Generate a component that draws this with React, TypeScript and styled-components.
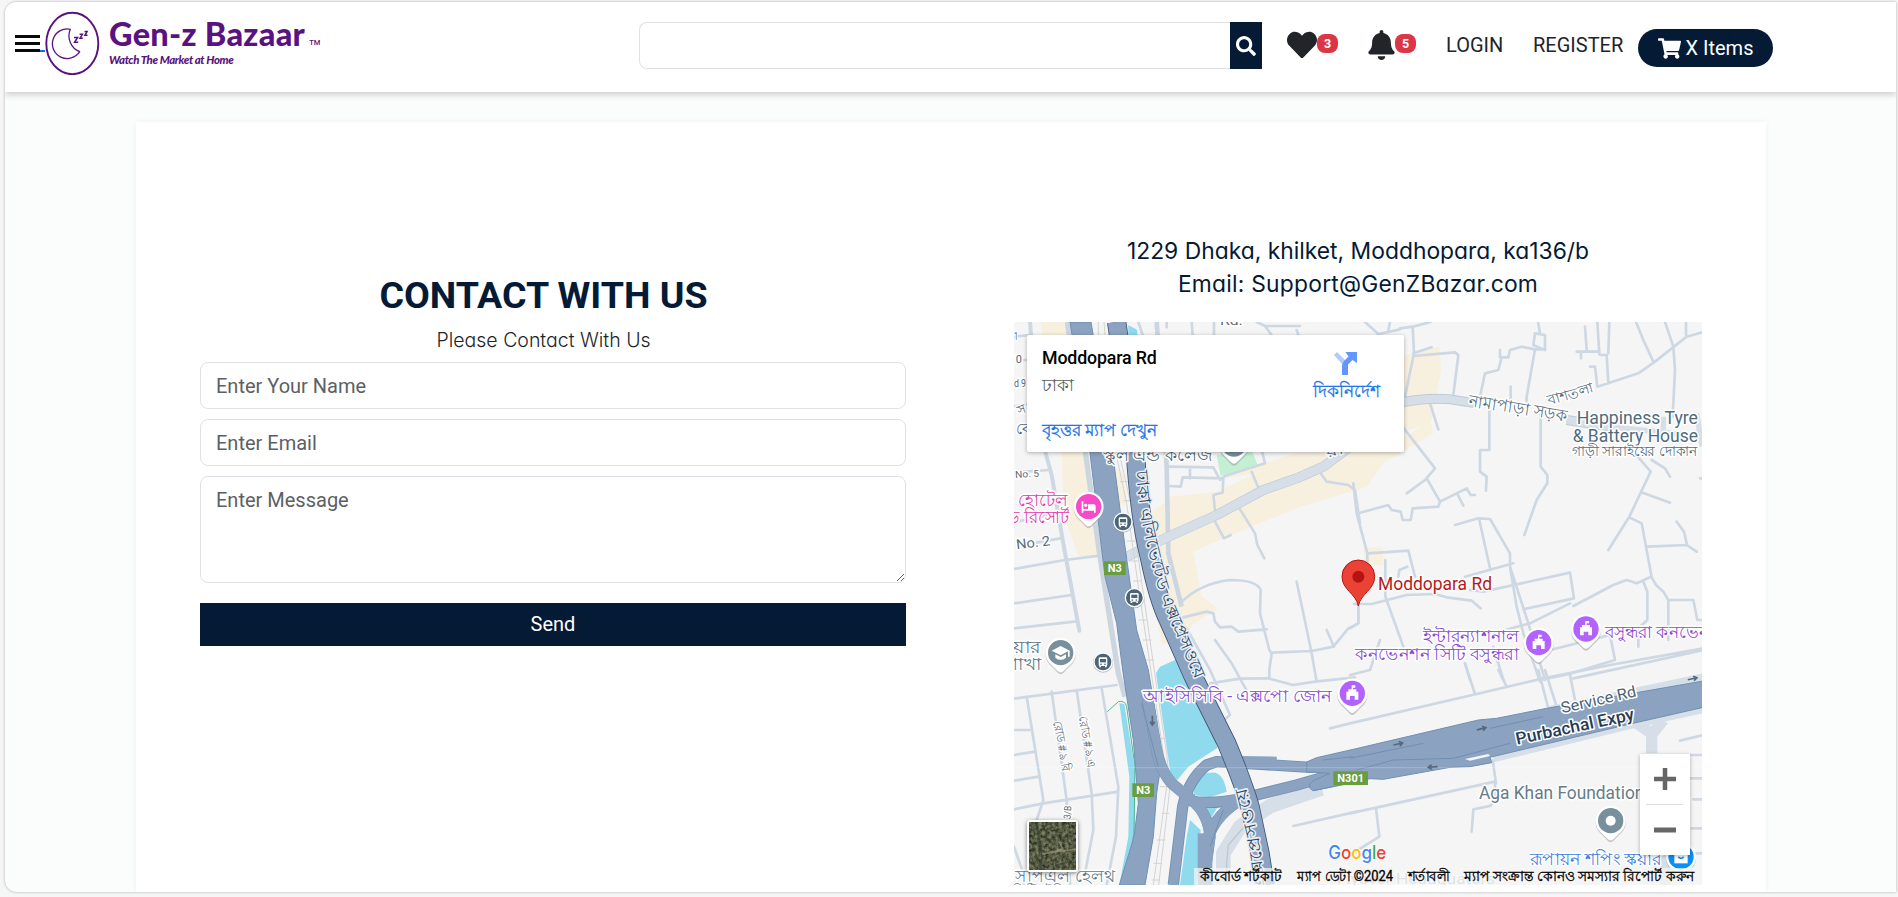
import React from 'react';
import styled, { createGlobalStyle } from 'styled-components';
import { FaHeart, FaBell, FaSearch, FaShoppingCart } from 'react-icons/fa';

const NAVY = '#041a35';
const PURPLE = '#5a1280';

const GlobalStyle = createGlobalStyle`
  * { box-sizing: border-box; }
  body {
    margin: 0;
    background: #f6f6f6;
    font-family: Roboto, 'Noto Sans', sans-serif;
    font-size: 20px;
    color: #212529;
    overflow: hidden;
  }
`;

const Frame = styled.div`
  display: flex;
  flex-direction: column;
  height: 890px;
  margin: 2px 2px 5px 5px;
  background: #fafdfc;
  border-radius: 12px 0 0 12px;
  box-shadow: 0 0 3px rgba(0, 0, 0, 0.3);
  overflow: hidden;
`;

const Header = styled.header`
  display: flex;
  align-items: flex-start;
  flex: none;
  height: 90px;
  padding-left: 10px;
  background: #fff;
  box-shadow: 0 3px 6px rgba(0, 0, 0, 0.18);
`;

const Burger = styled.div`
  display: flex;
  flex-direction: column;
  gap: 4px;
  width: 25px;
  margin-top: 33px;
`;

const Bar = styled.span`
  height: 3px;
  background: #0a0a0a;
`;

const LogoLink = styled.a`
  display: flex;
  align-items: flex-start;
  width: 599px;
  color: ${PURPLE};
`;

const LinkTick = styled.span`
  width: 5px;
  height: 2px;
  margin-top: 48px;
  background: #0d6efd;
`;

const LogoMark = styled.svg`
  width: 55px;
  height: 64px;
  margin-top: 9px;
`;

const Brand = styled.div`
  margin: 11px 0 0 9px;
  font-family: Lato, sans-serif;
  white-space: nowrap;
`;

const BrandName = styled.div`
  font-size: 32.5px;
  font-weight: 900;
  line-height: 42px;
  letter-spacing: 0.3px;
  sup {
    margin-left: 4px;
    font: 500 7.5px Roboto, sans-serif;
    letter-spacing: 0;
    vertical-align: 1px;
  }
`;

const Tagline = styled.div`
  margin-top: -5px;
  font-size: 11.4px;
  font-style: italic;
  font-weight: 900;
  line-height: 19px;
  letter-spacing: -0.38px;
`;

const Search = styled.div`
  display: flex;
  width: 623px;
  height: 47px;
  margin-top: 20px;
`;

const SearchInput = styled.input`
  flex: 1;
  border: 1px solid #dee2e6;
  border-right: 0;
  border-radius: 8px 0 0 8px;
  outline: none;
`;

const SearchButton = styled.button`
  display: flex;
  align-items: center;
  justify-content: center;
  width: 32px;
  border: 0;
  padding: 0;
  background: ${NAVY};
  color: #fff;
  font-size: 20px;
`;

const Counter = styled.div<{ $left: number }>`
  display: flex;
  align-items: flex-start;
  height: 34px;
  margin: 28px 0 0 ${p => p.$left}px;
`;

const Badge = styled.span`
  width: 21px;
  height: 19px;
  margin-top: 4px;
  border-radius: 8px;
  background: #dc3545;
  color: #fff;
  font-size: 12.5px;
  font-weight: 700;
  line-height: 19px;
  text-align: center;
`;

const NavLink = styled.a<{ $left: number; $width: number }>`
  width: ${p => p.$width}px;
  margin: 31px 0 0 ${p => p.$left}px;
  line-height: 24px;
  white-space: nowrap;
`;

const Cart = styled.button`
  display: flex;
  align-items: center;
  justify-content: center;
  gap: 5px;
  width: 135px;
  height: 38px;
  margin: 27px 0 0 15px;
  border: 0;
  border-radius: 19px;
  padding: 0;
  background: ${NAVY};
  color: #fff;
  font: 20px Roboto, sans-serif;
`;

const Panel = styled.main`
  display: flex;
  align-items: flex-start;
  width: 1630px;
  height: 780px;
  margin: 30px 0 0 131px;
  padding: 0 64px;
  background: #fff;
  box-shadow: 0 0 5px rgba(0, 0, 0, 0.06);
`;

const Form = styled.form`
  display: flex;
  flex-direction: column;
  width: 706px;
  padding-top: 150px;
`;

const Title = styled.h1`
  width: 687px;
  margin: 0;
  color: ${NAVY};
  font-size: 37.5px;
  font-weight: 700;
  line-height: 46px;
  text-align: center;
`;

const Subtitle = styled.p`
  width: 687px;
  margin: 9px 0 8px;
  font-family: Inter, sans-serif;
  font-feature-settings: 'cv11';
  font-size: 19.5px;
  font-weight: 300;
  line-height: 27px;
  text-align: center;
`;

const fieldCss = `
  border: 1px solid #dee2e6;
  border-radius: 8px;
  padding: 10px 15px;
  background: #fff;
  font: 20px/27px Roboto, sans-serif;
  outline: none;
  &::placeholder { color: #5c6065; opacity: 1; }
`;

const Field = styled.input`
  ${fieldCss}
  height: 47px;
  margin-bottom: 10px;
`;

const Message = styled.textarea`
  ${fieldCss}
  height: 107px;
  margin-bottom: 20px;
  resize: vertical;
`;

const Send = styled.button`
  height: 43px;
  border: 0;
  padding: 0 0 2px;
  background: ${NAVY};
  color: #fff;
  font: 20px Roboto, sans-serif;
`;

const Place = styled.section`
  width: 688px;
  margin-left: 108px;
  padding-top: 113px;
`;

const Address = styled.address`
  margin-bottom: 21px;
  color: ${NAVY};
  font-family: Inter, sans-serif;
  font-feature-settings: 'cv11';
  font-size: 22.85px;
  font-style: normal;
  line-height: 33px;
  text-align: center;
`;

const Email = styled.div`
  letter-spacing: 0.22px;
`;

const MapBox = styled.div`
  position: relative;
  width: 688px;
  height: 563px;
  overflow: hidden;
  background: #f5f5f5;
`;

const MapSvg = styled.svg`
  display: block;
  width: 688px;
  height: 563px;
  font-family: Roboto, sans-serif;
`;

const InfoCard = styled.div`
  position: absolute;
  left: 13px;
  top: 13px;
  display: flex;
  justify-content: space-between;
  width: 377px;
  height: 117px;
  padding: 11px 22px 0 15px;
  border-radius: 2px;
  background: #fff;
  box-shadow: 0 1px 4px rgba(0, 0, 0, 0.3);
`;

const PlaceName = styled.div`
  color: #000;
  font-size: 17.8px;
  font-weight: 500;
  line-height: 24px;
  letter-spacing: -0.15px;
`;

const PlaceCity = styled.div`
  margin-top: 4px;
  color: #5b5b5b;
  font-size: 16.5px;
  line-height: 24px;
`;

const BlueLink = styled.a<{ $top: number }>`
  display: block;
  margin-top: ${p => p.$top}px;
  color: #1a73e8;
  font-size: 17px;
  line-height: 24px;
  white-space: nowrap;
  -webkit-text-stroke: 0.3px #1a73e8;
`;

const Directions = styled.div`
  display: flex;
  flex-direction: column;
  align-items: center;
  padding-top: 5px;
  padding-right: 2px;
  svg { margin-right: 4px; }
`;

const ZoomBox = styled.div`
  position: absolute;
  left: 626px;
  top: 432px;
  width: 50px;
  height: 101px;
  background: #fff;
  box-shadow: 0 1px 4px rgba(0, 0, 0, 0.3);
`;

const Thumb = styled.div`
  position: absolute;
  left: 13px;
  top: 498px;
  width: 51px;
  height: 52px;
  border: 2px solid #fff;
  border-radius: 3px;
  box-shadow: 0 1px 4px rgba(0, 0, 0, 0.5);
  svg { display: block; }
`;

type LabelProps = {
  x: number; y: number; w?: number; size?: number; fill?: string;
  rotate?: number; weight?: number; halo?: number; children: React.ReactNode;
};

function Label({ x, y, w, size = 50, fill = '#4f6b7c', rotate = 0, weight = 400, halo = 9, children }: LabelProps) {
  return (
    <text x={x} y={y} fontSize={size} fill={fill} fontWeight={weight}
      stroke="#fff" strokeWidth={halo} strokeLinejoin="round" paintOrder="stroke"
      textLength={w} lengthAdjust="spacingAndGlyphs"
      transform={rotate ? `rotate(${rotate} ${x} ${y})` : undefined}>
      {children}
    </text>
  );
}

function Pin({ x, y, color, children }: { x: number; y: number; color: string; children?: React.ReactNode }) {
  return (
    <g transform={`translate(${x} ${y})`}>
      <path d="M0 62C-8 62-14 50-28 38A45 45 0 1 1 28 38C14 50 8 62 0 62Z" fill="#8a8f94" opacity=".45" transform="translate(0 3)" />
      <path d="M0 59C-8 59-14 48-28 36A45 45 0 1 1 28 36C14 48 8 59 0 59Z" fill="#fff" />
      <circle r="38" fill={color} />
      {children}
    </g>
  );
}

const Castle = () => (
  <path d="M-2-24h11v7H2v5h10v7h6v24H7V8H-7v11h-11V-5h6v-7h10z" fill="#fff" />
);

const Bus = ({ x, y }: { x: number; y: number }) => (
  <g transform={`translate(${x} ${y})`}>
    <circle r="30" fill="#8a8f94" opacity=".5" cy="2" />
    <circle r="29" fill="#fff" />
    <circle r="25" fill="#4b6478" />
    <rect x="-13" y="-14" width="26" height="26" rx="4" fill="#fff" />
    <rect x="-9" y="-9" width="18" height="10" fill="#4b6478" />
    <circle cx="-6" cy="7" r="2.5" fill="#4b6478" /><circle cx="6" cy="7" r="2.5" fill="#4b6478" />
    <path d="M-11 12h5v4h-5zM6 12h5v4h-5z" fill="#fff" />
  </g>
);

const Shield = ({ x, y, w, name }: { x: number; y: number; w: number; name: string }) => (
  <g>
    <rect x={x} y={y} width={w} height="41" fill="#6a9c40" />
    <text x={x + w / 2} y={y + 32} textAnchor="middle" fontSize="33" fontWeight="700" fill="#fff">{name}</text>
  </g>
);

const Arrow = ({ x, y, rotate }: { x: number; y: number; rotate: number }) => (
  <path d="M-15 0H10M3-7L13 0L3 7" stroke="#56697c" strokeWidth="5" fill="none" transform={`translate(${x} ${y}) rotate(${rotate})`} />
);

/* Map space: three units per pixel. */
function CityMap() {
  return (
    <MapSvg viewBox="12 306 2064 1689">
      <defs>
        <path id="expressway" d="M391 752L408 905L435 1020Q460 1120 490 1190L572 1380" />
        <path id="expresswaySouth" d="M756 2010L733 1860L692 1695" />
      </defs>
      <rect x="12" y="306" width="2064" height="1689" fill="#f5f5f5" />

      <g fill="#f8f0de">
        <path d="M92 306H165L186 540L240 720L262 960L270 1010L205 1008L190 965L160 880L155 690L110 440Z" />
        <path d="M318 740L340 760L350 850L325 860Z" />
        <path d="M400 890L470 845L478 830L620 815L740 760L640 775L850 700L1010 696H1120L1260 600L1270 640L1120 730L1070 800L860 865L700 930L550 995L575 1130L625 1165L560 1205L525 1235L480 1200L472 1270L455 1274L420 1060Z" />
        <path d="M1170 410L1288 380L1294 450L1275 545L1262 610L1170 640Z" />
        <path d="M1060 985L1118 980L1120 1036L1065 1035Z" />
      </g>
      <path d="M620 705L725 690L745 740L632 768Z" fill="#c3f0d2" />

      <g fill="#90daee">
        <path d="M355 315L382 330V350H355Z" />
        <path d="M450 1340L500 1318L560 1350L622 1584L535 1640L497 1686H485L438 1360Z" />
        <path d="M550 1725Q560 1655 605 1658Q640 1655 650 1715L600 1732Z" />
        <path d="M575 1756L628 1752L595 1808Z" />
        <path d="M540 1800L572 1830L560 1995H510L530 1850Z" />
        <path d="M328 1450L343 1452L375 1650L374 1830L340 1995H328L355 1850L358 1670Z" />
      </g>
      <path d="M292 1475L325 1445Q345 1440 350 1460L375 1640L372 1840L345 1995" stroke="#4fb58d" strokeWidth="3" fill="none" />

      <g stroke="#cdd8e3" strokeWidth="8" fill="none" strokeLinejoin="round" strokeLinecap="round">
        {/* north-west blocks */}
        <path d="M60 306L85 620L125 765L158 960L208 1232" strokeWidth="12" />
        <path d="M12 350L60 345M12 420H50M12 560L70 550M12 1047L165 1020L270 1007M12 1150L185 1125M12 1225L200 1204M12 757L120 750M80 968L150 955M20 905L140 880" />
        <path d="M385 306L398 345M470 306V322M545 306L548 345M612 306V345M740 306L765 318H870M765 318L785 345M1065 306L1105 342L1170 328M1140 306L1135 330M860 330L865 345" />
        {/* centre */}
        <path d="M470 740L610 742L630 780L645 768L765 730L755 690M540 742V775M480 798L512 800L518 772L640 775L638 818L610 825L615 870M725 755L745 803M615 905L642 955L662 945M690 868L735 940L742 975L763 1015" />
        <path d="M925 750L950 785L1015 795L1035 810L1050 910M510 1150Q570 1090 660 1080Q740 1080 752 1110L750 1180L778 1290L785 1300L778 1350V1375M520 1192L590 1175L610 1180L615 1205L630 1222L665 1220L685 1235L770 1228M615 1260L665 1330L710 1412M785 1298L905 1293L970 1280L1015 1225L1045 1210V1157M860 1085L880 1180L905 1300L920 1385M950 1230L972 1280M530 1225L600 1350L660 1485L630 1510" />
        <path d="M600 1390L690 1376L775 1375L850 1395L915 1385L1035 1372M960 1525L1020 1510M850 1818L1040 1775" />
        <path d="M1032 1152L1085 1152L1190 1125L1275 1122L1310 1132L1385 1142L1412 1165M1045 1157V1210L1020 1225M1126 1020V1130L1180 1280" />
        {/* north-east blocks */}
        <path d="M1170 325L1208 320L1262 306M1208 320L1212 400L1185 530M1210 400L1265 382M1210 408L1335 397L1345 405L1330 525M1260 550L1285 628M1170 610L1240 700L1275 745L1245 780L1190 820M1252 778L1290 845" />
        <path d="M1438 570V690M1470 390V412H1495L1500 390L1535 380L1575 388H1605V345L1575 340L1570 375L1605 390M1584 306L1590 340M1575 388L1550 530V560M1475 412L1465 450L1425 460L1410 530M1502 500V560M1438 690H1410V755L1430 770L1428 812M1592 560V740L1612 765V790L1580 840L1543 945" />
        <path d="M1700 395H1765L1770 405H1790L1795 490M1725 320L1730 390M1713 395V415M1762 306L1768 400M1798 306L1795 400M1740 440H1755L1762 500L1885 460L1935 425L2030 350L2080 336M1878 306L1900 360L1930 425M1965 306L1990 380L1995 450L1988 590M2028 306V345M1885 712L1922 755L1858 890L1795 990M1898 818L1980 848M1925 720L1965 745L1980 770M1858 892L1895 910L1925 1072L1938 1095L1960 1115L1975 1140H2050L2062 1200H2076M1912 980L2030 975L2060 995M2000 905L2022 935L2030 970M1975 1140V1260M1690 1158L1810 1095L1850 1080L1880 1090L1920 1072M1900 1085L1912 1115V1200L1885 1225V1280M2070 775H2080" />
        {/* centre-east */}
        <path d="M1030 790L1040 880L1072 1000V1030M1045 880L1135 855L1145 870L1172 875L1178 900H1202L1208 865L1285 860L1290 845L1370 805L1382 825H1395M1342 822L1360 857M1075 1000L1195 992L1215 1070M1165 1070L1168 1050L1192 1040" />
        <path d="M1335 915L1405 895L1440 897L1500 1000V1040L1555 1210L1605 1380M1408 900L1440 1045M1365 1070L1510 1030M1380 1110L1420 1115L1680 1058L1692 1135L1540 1168M1500 1040L1520 1160L1540 1240L1590 1385M1485 1230L1560 1210L1680 1150M1620 1290L1800 1245L1815 1320L1685 1360L1590 1380M1450 1280L1480 1380M1365 1330L1380 1380" />
        {/* band north of the expressway */}
        <path d="M1020 1510L1400 1422L1600 1375L1800 1335L2080 1285M1690 1375L2080 1290M1365 1330L1395 1422M1465 1350L1490 1400M1020 1365L1080 1350L1110 1260M1585 1350L1615 1465M1605 1350L1640 1460M1680 1365L1695 1440" />
        {/* south */}
        <path d="M1020 1780L1455 1685V1740L1440 1758L1390 1768L1385 1835M1448 1620L1458 1690M1098 1765L1108 1850L1020 1905M2010 1562L2080 1545M2040 1605H2080M2040 1675H2080M2050 1738H2080M2045 1825H2080M2040 1900H2080" />
        {/* south-west blocks */}
        <path d="M12 1436L320 1395M50 1430L100 1740L80 1800M125 1415L170 1740L180 1995M200 1410L245 1720L250 1830L225 1960M275 1405L325 1700L318 1850L290 1995M12 1530H60M12 1605L75 1595M12 1682L85 1670M12 1768L100 1750L325 1715M12 1880L40 1960V1995" />
      </g>

      <g fill="none" strokeLinejoin="round" stroke="#d6dfe7">
        <path d="M172 306L228 710L270 1010L325 1360L345 1430" strokeWidth="16" stroke="#cbd6e0" />
        <path d="M440 306L470 740L475 1000L515 1160" strokeWidth="14" stroke="#cbd6e0" />
        <path d="M350 1010L480 948L620 885L760 810L860 775L940 740L1020 680" strokeWidth="30" stroke="#bfccd8" />
        <path d="M350 1010L480 948L620 885L760 810L860 775L940 740L1020 680" strokeWidth="26" />
        <path d="M1170 548Q1250 532 1320 538L1400 550M1670 600L1800 620" strokeWidth="30" stroke="#bfccd8" />
        <path d="M1170 548Q1250 532 1320 538L1400 550M1670 600L1800 620" strokeWidth="24" />
        <path d="M1800 620L2080 650M1960 590V635M2060 580L2076 680" strokeWidth="16" />
        <path d="M640 1995V1900L690 1820L780 1758L935 1705" strokeWidth="44" />
        <path d="M720 1800L655 1875L650 1930V1995" strokeWidth="4" stroke="#bdc8d0" />
        <path d="M1450 1616L1860 1516L2080 1468" strokeWidth="22" />
        <path d="M1620 1470L2080 1372" strokeWidth="24" />
        <path d="M1925 1600V1540L1880 1510M1928 1540L1960 1500" strokeWidth="34" />
        <path d="M1965 1995V1880" strokeWidth="28" />
      </g>

      {/* railway */}
      <g fill="none" stroke="#d3d3d3" strokeWidth="3">
        <path d="M265 306V345M282 306L285 345M318 700L350 850L385 1100L430 1400L460 1600L470 1700L430 1995M328 700L362 850L397 1100L440 1400L470 1600L480 1700L446 1995" />
        <path d="M330 785H355M340 842H362M350 963H375M360 1023H386M370 1083H396M386 1200H412M398 1260H424M408 1320H432M445 1555H462M450 1700H482M455 1780H478M440 1860H466M430 1930H456M425 1980H450" />
      </g>

      {/* expressways */}
      <g fill="none" strokeLinejoin="round">
        <g fill="#8ba3c0" stroke="#6f90b4" strokeWidth="3">
          <path d="M180 306H243L308 700L345 980L380 1230L415 1350L440 1500L452 1640L440 1720L430 1850L405 1995H328L372 1850L385 1750L370 1560L338 1350L320 1210L285 1070L240 700Z" />
        </g>
        <g stroke="#6f90b4" strokeWidth="34">
          <path d="M490 1995L518 1760Q535 1680 590 1635L620 1625L900 1642L1000 1635" />
          <path d="M410 1420L438 1580Q450 1650 485 1690L545 1740Q595 1780 600 1850L580 1995" />
          <path d="M540 1742Q600 1755 700 1735L860 1695L1000 1655" />
          <path d="M700 1735Q620 1780 595 1850" />
        </g>
        <g stroke="#8ba3c0" strokeWidth="29">
          <path d="M490 1995L518 1760Q535 1680 590 1635L620 1625L900 1642L1000 1635" />
          <path d="M410 1420L438 1580Q450 1650 485 1690L545 1740Q595 1780 600 1850L580 1995" strokeWidth="32" />
          <path d="M540 1742Q600 1755 700 1735L860 1695L1000 1655" />
          <path d="M700 1735Q620 1780 595 1850" strokeWidth="34" />
          <path d="M585 1840V1995" strokeWidth="44" />
          <path d="M640 1625L800 1628" strokeWidth="36" />
        </g>
        <path d="M890 1626L920 1613L1030 1588L1405 1500L1460 1495L1610 1465L2080 1383V1462L1860 1512L1440 1612L1445 1628L1380 1640L1320 1642L1120 1678L1080 1676L910 1712Q885 1700 910 1682L960 1660L890 1655Z" fill="#8ba3c0" stroke="#6f90b4" strokeWidth="3" />
        <path d="M1040 1650L1150 1620L1330 1615L1500 1570M1020 1615L1240 1570M1440 1525L1600 1490M940 1620L1030 1610M910 1712L1020 1690M395 1450L445 1640M600 1880L640 1770" stroke="#6f90b4" strokeWidth="3" />
        <path d="M1365 1617L1435 1602L1440 1608L1380 1622Z" fill="#f5f5f5" />
        <path d="M320 306L376 700Q390 900 418 1010Q445 1140 475 1200L550 1370L650 1570Q700 1690 720 1760L750 1900L765 1995" stroke="#3d5577" strokeWidth="58" />
        <path d="M320 306L376 700Q390 900 418 1010Q445 1140 475 1200L550 1370L650 1570Q700 1690 720 1760L750 1900L765 1995" stroke="#8ba3c0" strokeWidth="53" />
        <path d="M12 1643H2076" stroke="#fff" strokeWidth="2" opacity=".35" />
      </g>
      <Arrow x={427} y={1502} rotate={90} />
      <Arrow x={1165} y={1572} rotate={-12} />
      <Arrow x={1415} y={1526} rotate={-14} />
      <Arrow x={1268} y={1641} rotate={176} />
      <Arrow x={2048} y={1376} rotate={-12} />

      {/* road and district labels */}
      <Label x={630} y={316} w={68} size={36} fill="#5b6b78">Rd.</Label>
      <Label x={-6} y={360} w={30} size={30}>-11</Label>
      <Label x={-10} y={430} w={46} size={30}>-10</Label>
      <Label x={12} y={500} w={36} size={30}>d 9</Label>
      <Label x={26} y={586} size={38} rotate={-20}>স</Label>
      <Label x={18} y={642} w={55} size={44}>বো</Label>
      <Label x={280} y={722} w={328} fill="#4f6470">স্কুল এন্ড কলেজ</Label>
      <Label x={955} y={715} w={50} size={42} rotate={-20}>রা</Label>
      <Label x={16} y={774} w={72} size={29} rotate={-3} fill="#5b6b78">No. 5</Label>
      <Label x={20} y={988} w={103} size={41} rotate={-7} fill="#5b6b78">No. 2</Label>
      <Label x={25} y={858} w={150} fill="#e33aab">হোটেল</Label>
      <Label x={-10} y={910} w={188} fill="#e33aab">ড রিসোর্ট</Label>
      <Label x={10} y={1299} w={82} fill="#5b7482">য়ার</Label>
      <Label x={-8} y={1350} w={102} fill="#5b7482">শাখা</Label>
      <Label x={1373} y={558} w={300} size={50} rotate={9} fill="#546e7a">নামাপাড়া সড়ক</Label>
      <Label x={1617} y={556} w={142} size={42} rotate={-16} fill="#546e7a">বাশতলা</Label>
      <Label x={1700} y={613} w={364} size={53}>Happiness Tyre</Label>
      <Label x={1688} y={667} w={376} size={53}>&amp; Battery House</Label>
      <Label x={1686} y={708} w={376} size={42}>গাড়ী সারাইয়ের দোকান</Label>
      <Label x={1239} y={1267} w={290} fill="#8a49d0">ইন্টারন্যাশনাল</Label>
      <Label x={1035} y={1320} w={492} fill="#8a49d0">কনভেনশন সিটি বসুন্ধরা</Label>
      <Label x={1785} y={1254} w={372} fill="#8a49d0">বসুন্ধরা কনভেনশন</Label>
      <Label x={400} y={1445} w={566} fill="#8a49d0">আইসিসিবি - এক্সপো জোন</Label>
      <Label x={1657} y={1480} w={230} size={46} rotate={-13} fill="#4a5f73">Service Rd</Label>
      <Label x={1521} y={1574} w={362} size={51} rotate={-12} weight={500} fill="#263b58">Purbachal Expy</Label>
      <Label x={1407} y={1738} w={496} size={53} fill="#667b88">Aga Khan Foundation</Label>
      <Label x={1560} y={1934} w={394} fill="#3f7de0">রূপায়ন শপিং স্কয়ার</Label>
      <Label x={980} y={1993} w={476} size={43} fill="#a6b2ba">Flyover Headquaters</Label>
      <Label x={130} y={1505} w={155} size={36} rotate={80} fill="#5b6b78">রোড # ৯ বি</Label>
      <Label x={206} y={1492} w={155} size={36} rotate={80} fill="#5b6b78">রোড # ৯ এ</Label>
      <Label x={180} y={1812} w={54} size={30} rotate={-85} fill="#5b6b78">13/B</Label>
      <Label x={16} y={1986} w={300} size={52} fill="#667b88">সাপএল হেলথ</Label>
      <Label x={10} y={2030} w={160} size={44} fill="#667b88">সিটিচটলি</Label>

      <text fontSize="50" fill="#2d4565" stroke="#e9eef3" strokeWidth="9" strokeLinejoin="round" paintOrder="stroke" dy="14">
        <textPath href="#expressway" textLength="650" lengthAdjust="spacingAndGlyphs">ঢাকা এলিভেটেড এক্সপ্রেসওয়ে</textPath>
      </text>
      <text fontSize="50" fill="#2d4565" stroke="#e9eef3" strokeWidth="9" strokeLinejoin="round" paintOrder="stroke" dy="14">
        <textPath href="#expresswaySouth" textLength="312" lengthAdjust="spacingAndGlyphs">এক্সপ্রেসওয়ে</textPath>
      </text>

      <Shield x={282} y={1024} w={65} name="N3" />
      <Shield x={367} y={1690} w={65} name="N3" />
      <Shield x={970} y={1654} w={104} name="N301" />
      <Bus x={339} y={906} />
      <Bus x={373} y={1133} />
      <Bus x={279} y={1326} />

      <Pin x={672} y={672} color="#78909c" />
      <Pin x={236} y={860} color="#f74ac9">
        <path d="M-21-16v34h5v-6h32v6h5v-19q0-6-6-6H-2v14h-14v-23z" fill="#fff" />
        <circle cx="-9" cy="-4" r="5" fill="#fff" />
      </Pin>
      <Pin x={152} y={1298} color="#78909c">
        <path d="M0-20L-27-6L0 8L22-4V12H27V-6ZM-16 5V15Q0 28 16 15V5L0 13Z" fill="#fff" />
      </Pin>
      <Pin x={1586} y={1268} color="#b263ff"><Castle /></Pin>
      <Pin x={1728} y={1227} color="#b263ff"><Castle /></Pin>
      <Pin x={1027} y={1420} color="#b263ff"><Castle /></Pin>
      <Pin x={1802} y={1802} color="#78909c"><circle r="15" fill="#fff" /></Pin>
      <Pin x={2013} y={1910} color="#0b8ffb">
        <path d="M-20-12H20V20H-20Z" fill="#fff" /><path d="M-8 0Q0 10 8 0" stroke="#0b8ffb" strokeWidth="5" fill="none" />
      </Pin>

      <path d="M1045 1158C1038 1120 996 1110 996 1069A49 49 0 0 1 1094 1069C1094 1110 1052 1120 1045 1158Z" fill="#ea4335" stroke="#b31412" strokeWidth="3" />
      <circle cx="1045" cy="1070" r="18" fill="#b31412" />
      <Label x={1104} y={1109} w={342} size={54} fill="#b8181b">Moddopara Rd</Label>

      {/* attribution row */}
      <rect x="552" y="1944" width="1524" height="51" fill="#f5f5f5" opacity=".72" />
      <g fontSize="42" fill="#000" stroke="#000" strokeWidth="1">
        <text x="570" y="1983" textLength="245" lengthAdjust="spacingAndGlyphs">কীবোর্ড শর্টকাট</text>
        <text x="862" y="1983" textLength="287" lengthAdjust="spacingAndGlyphs">ম্যাপ ডেটা ©2024</text>
        <text x="1194" y="1983" textLength="126" lengthAdjust="spacingAndGlyphs">শর্তাবলী</text>
        <text x="1363" y="1983" textLength="690" lengthAdjust="spacingAndGlyphs">ম্যাপ সংক্রান্ত কোনও সমস্যার রিপোর্ট করুন</text>
      </g>
      <text x="955" y="1917" fontSize="55" fontWeight="500" textLength="174" lengthAdjust="spacingAndGlyphs"
        stroke="#fff" strokeWidth="5" paintOrder="stroke" style={{ fontFamily: 'Inter, sans-serif' }}>
        <tspan fill="#4285f4">G</tspan><tspan fill="#ea4335">o</tspan><tspan fill="#fbbc04">o</tspan><tspan fill="#4285f4">g</tspan><tspan fill="#34a853">l</tspan><tspan fill="#ea4335">e</tspan>
      </text>
    </MapSvg>
  );
}

export default function App() {
  return (
    <>
      <GlobalStyle />
      <Frame>
        <Header>
          <Burger><Bar /><Bar /><Bar /></Burger>
          <LogoLink>
            <LinkTick />
            <LogoMark viewBox="0 0 55 64" fill="none" stroke={PURPLE}>
              <ellipse cx="27.3" cy="32.5" rx="26" ry="30.7" strokeWidth="1.9" />
              <path d="M25.3 18.3A14.8 14.8 0 1 0 34.7 40.7A17 17 0 0 1 25.3 18.3Z" strokeWidth="1.3" strokeLinejoin="round" />
              <path d="M29 26.5h3.6l-3 4.8h3.6M34.6 23.3h2.8l-2.4 4h2.8M39.5 20.5h2.6l-2.2 3.7h2.6" strokeWidth="1.5" />
            </LogoMark>
            <Brand>
              <BrandName>Gen-z Bazaar<sup>TM</sup></BrandName>
              <Tagline>Watch The Market at Home</Tagline>
            </Brand>
          </LogoLink>
          <Search>
            <SearchInput />
            <SearchButton type="button"><FaSearch /></SearchButton>
          </Search>
          <Counter $left={25}>
            <FaHeart size={30} />
            <Badge>3</Badge>
          </Counter>
          <Counter $left={30}>
            <FaBell size={30} style={{ width: 27 }} />
            <Badge>5</Badge>
          </Counter>
          <NavLink $left={30} $width={57}>LOGIN</NavLink>
          <NavLink $left={30} $width={90}>REGISTER</NavLink>
          <Cart><FaShoppingCart size={23} />X Items</Cart>
        </Header>
        <Panel>
          <Form>
            <Title>CONTACT WITH US</Title>
            <Subtitle>Please Contact With Us</Subtitle>
            <Field placeholder="Enter Your Name" />
            <Field placeholder="Enter Email" />
            <Message placeholder="Enter Message" />
            <Send type="button">Send</Send>
          </Form>
          <Place>
            <Address>
              <div>1229 Dhaka, khilket, Moddhopara, ka136/b</div>
              <Email>Email: Support@GenZBazar.com</Email>
            </Address>
            <MapBox>
              <CityMap />
              <InfoCard>
                <div>
                  <PlaceName>Moddopara Rd</PlaceName>
                  <PlaceCity>ঢাকা</PlaceCity>
                  <BlueLink $top={20}>বৃহত্তর ম্যাপ দেখুন</BlueLink>
                </div>
                <Directions>
                  <svg width="24" height="24" viewBox="0 0 24 24">
                    <path d="M1 4L4 1L13 10L10 14Z" fill="#b1cbff" />
                    <path d="M9 24V15Q9 12 11.500 9.500L15.500 5.500L12.500 1H24V12L19.500 9L15 13.500V24Z" fill="#6496ff" />
                  </svg>
                  <BlueLink $top={4}>দিকনির্দেশ</BlueLink>
                </Directions>
              </InfoCard>
              <ZoomBox>
                <svg width="50" height="101" viewBox="0 0 50 101">
                  <path d="M14 25H36M25 14V36" stroke="#666" strokeWidth="4.500" />
                  <path d="M6 50.500H43" stroke="#e0e0e0" />
                  <path d="M14 76H36" stroke="#666" strokeWidth="5" />
                </svg>
              </ZoomBox>
              <Thumb>
                <svg width="47" height="48" viewBox="0 0 47 48">
                  <filter id="terrain" x="0" y="0" width="100%" height="100%" colorInterpolationFilters="sRGB">
                    <feTurbulence type="fractalNoise" baseFrequency=".3" numOctaves="3" seed="4" />
                    <feColorMatrix values=".6 0 0 0 .03 .6 0 0 0 .05 .5 0 0 0 .01 0 0 0 0 1" />
                  </filter>
                  <rect width="47" height="48" filter="url(#terrain)" />
                  <path d="M7 0L13 34L11 48" stroke="#3c4238" strokeWidth="2" fill="none" opacity=".8" />
                  <path d="M13 32L47 27M30 19L34 27L18 31" stroke="#a39b80" strokeWidth="1.500" fill="none" opacity=".65" />
                </svg>
              </Thumb>
            </MapBox>
          </Place>
        </Panel>
      </Frame>
    </>
  );
}
